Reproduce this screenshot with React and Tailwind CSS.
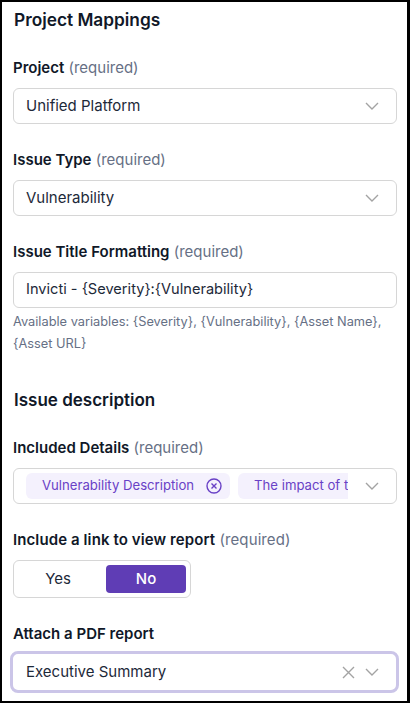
import React from "react";

const Chevron = () => (
  <svg width="14" height="8" viewBox="0 0 14 8" fill="none" stroke="#a3a3a3" strokeWidth="1.4" className="shrink-0">
    <path d="M1 1l6 6 6-6" />
  </svg>
);

const Label = ({ name, req = true, className = "" }) => (
  <div className={`text-[15px] leading-[20px] font-semibold text-[#101828] ${className}`}>
    {name}
    {req && <span className="font-normal text-[#667085]"> (required)</span>}
  </div>
);

const Field = ({ children }) => (
  <div className="mt-[10px] h-[36px] w-[384px] rounded-[6px] border border-[#d6d6d6] bg-white flex items-center pl-[12px] pr-[17px] text-[15px] text-[#1d2939]">
    {children}
  </div>
);

export default function App() {
  return (
    <div className="w-[410px] h-[703px] overflow-hidden border-2 border-r-[3px] border-black bg-white pl-[11px] font-['Inter','Noto_Sans',sans-serif]">
      <h2 className="mt-[7px] ml-[1px] text-[17.3px] leading-[22px] font-semibold text-[#101828]">Project Mappings</h2>
      <div className="mt-[27px]"><Label name="Project" /></div>
      <Field><span className="flex-1">Unified Platform</span><Chevron /></Field>
      <div className="mt-[26px]"><Label name="Issue Type" /></div>
      <Field><span className="flex-1">Vulnerability</span><Chevron /></Field>
      <div className="mt-[26px]"><Label name="Issue Title Formatting" /></div>
      <Field><span className="text-[14.6px]">Invicti - {"{Severity}:{Vulnerability}"}</span></Field>
      <p className="mt-[3px] w-[384px] text-[12.8px] leading-[22px] text-[#667085]">
        Available variables: {"{Severity}, {Vulnerability}, {Asset Name}, {Asset URL}"}
      </p>
      <h2 className="mt-[34px] ml-[1px] text-[17px] leading-[22px] font-semibold text-[#101828]">Issue description</h2>
      <div className="mt-[27px]"><Label name="Included Details" /></div>
      <Field>
        <div className="flex gap-[8px] overflow-hidden w-[322px] shrink-0 text-[13.15px] text-[#6941c6]">
          <div className="shrink-0 h-[26px] rounded-[6px] bg-[#f4f1fd] flex items-center pl-[16px] pr-[8px] gap-[12px]">
            <span>Vulnerability Description</span>
            <svg width="16" height="16" viewBox="0 0 16 16" fill="none" stroke="#6941c6" strokeWidth="1.4">
              <circle cx="8" cy="8" r="7" />
              <path d="M5.5 5.5l5 5M10.5 5.5l-5 5" />
            </svg>
          </div>
          <div className="shrink-0 h-[26px] rounded-[6px] bg-[#f4f1fd] flex items-center pl-[16px] pr-[8px] gap-[12px]">
            <span>The impact of t</span>
          </div>
        </div>
        <span className="ml-auto"><Chevron /></span>
      </Field>
      <div className="mt-[26px]"><Label name="Include a link to view report" className="tracking-[0.1px]" /></div>
      <div className="mt-[10px] h-[38px] w-[178px] rounded-[6px] border border-[#d6d6d6] flex items-center gap-[8px] p-[4px] text-[15px]">
        <div className="w-[80px] text-center text-[#1d2939]">Yes</div>
        <div className="w-[80px] h-[28px] rounded-[4px] bg-[#5f3db5] text-white font-medium flex items-center justify-center">No</div>
      </div>
      <div className="mt-[26px]"><Label name="Attach a PDF report" req={false} /></div>
      <div className="mt-[7px] h-[42px] w-[389px] -ml-[3px] rounded-[8px] border-[3px] border-[#cbc5e8] bg-white flex items-center pl-[13px] pr-[17px] text-[15px] text-[#1d2939]">
        <span className="flex-1">Executive Summary</span>
        <svg width="13" height="13" viewBox="0 0 13 13" fill="none" stroke="#a3a3a3" strokeWidth="1.4" className="mr-[10px]">
          <path d="M1 1l11 11M12 1L1 12" />
        </svg>
        <Chevron />
      </div>
    </div>
  );
}
